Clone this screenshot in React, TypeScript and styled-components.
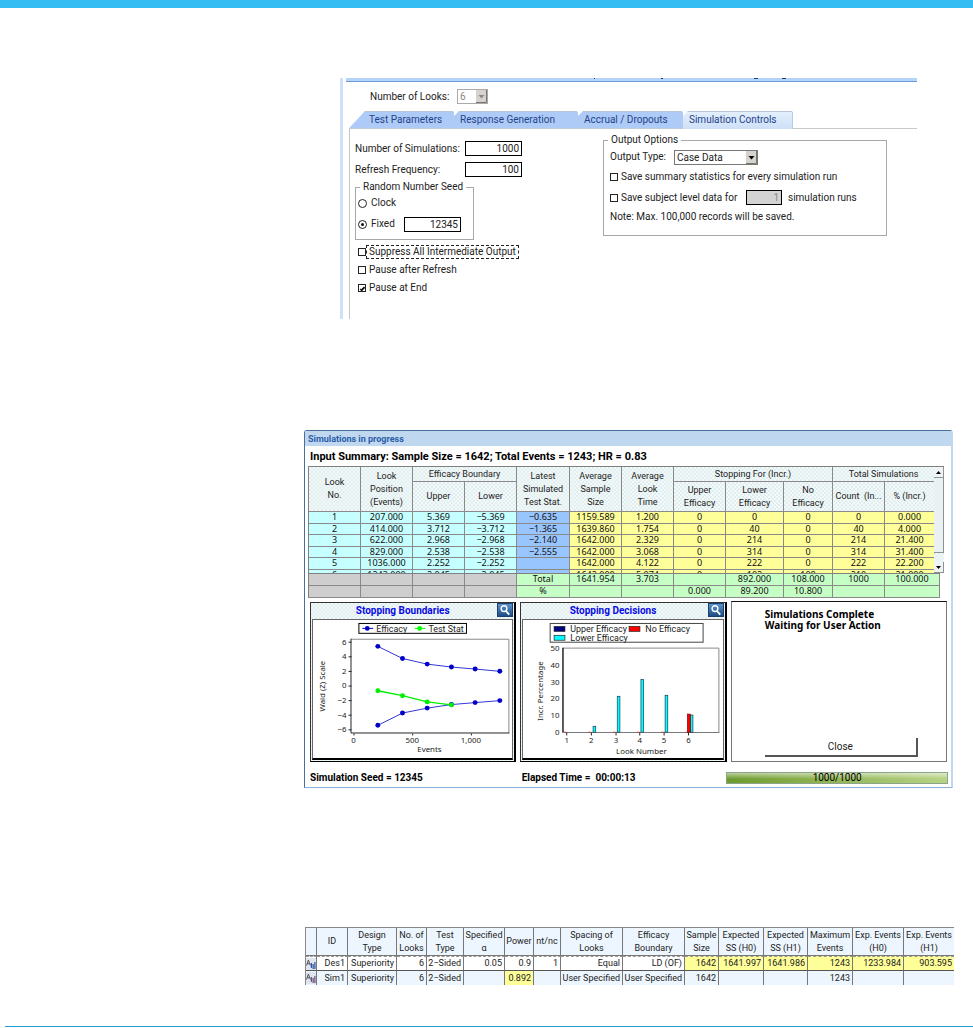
import React, { useId } from "react";
import styled, { createGlobalStyle, css } from "styled-components";

const Global = createGlobalStyle`
  *, *::before, *::after { box-sizing: border-box; }
  body {
    margin: 0;
    background: #fff;
    color: #222;
    font: 10px/14px Roboto, "Noto Sans", sans-serif;
  }
  input, button, select { font: inherit; color: inherit; margin: 0; border-radius: 0; }
`;

const texture = css`
  background: repeating-conic-gradient(#e3efee 0 25%, #f2f9fb 0 50%) 0 0 / 4px 4px;
`;

const Page = styled.div`
  display: flex;
  flex-direction: column;
`;
const TopBar = styled.div`
  height: 8px;
  background: #33bdf2;
`;
const Main = styled.main`
  padding: 70px 20px 0 304px;
`;
const BottomRule = styled.hr`
  width: calc(100% - 5px);
  height: 1px;
  margin: 41px 0 0 5px;
  border: 0;
  background: #1c9fd8;
`;

/* ---------- Simulation controls form ---------- */

const FormFrame = styled.section`
  min-height: 241px;
  margin: 0 36px 0 36px;
  border-left: 3px solid #cfe0f8;
  display: flex;
  flex-direction: column;
`;
const CaptionEdge = styled.div`
  height: 4px;
  margin-left: 3px;
  background: #b5d4fb;
  border-bottom: 1px solid #6c9bd8;
  overflow: hidden;
  svg { display: block; }
`;
const LooksRow = styled.div`
  display: flex;
  align-items: center;
  height: 29px;
  padding: 0 0 0 27px;
  label { width: 87px; }
`;
const Tabs = styled.div`
  display: flex;
  height: 18px;
  margin-left: 6px;
`;
const Tab = styled.button<{ $w: number; $active?: boolean; $first?: boolean }>`
  width: ${(p) => p.$w}px;
  padding: 0 0 0 ${(p) => (p.$first ? 20 : 6)}px;
  border: 0;
  border-top: 1px solid #b9c4d4;
  border-right: 1px solid #b4cbee;
  border-bottom: 1px solid #c3cbd8;
  border-radius: 0 2px 0 0;
  text-align: left;
  line-height: 16px;
  color: #1f4389;
  background: ${(p) => (p.$active ? "linear-gradient(#e3effc, #cfe0f8)" : "#aecbf8")};
  clip-path: ${(p) =>
    p.$first
      ? "polygon(0 100%, 0 96%, 16px 0, 100% 0, 100% 100%)"
      : "polygon(0 100%, 0 5px, 5px 0, 100% 0, 100% 100%)"};
  ${(p) => p.$active && "border-bottom-color: #cfe0f8;"}
`;
const TabFill = styled.div`
  flex: 1;
  border-bottom: 1px solid #c8c8c8;
`;
const TabBody = styled.div`
  flex: 1;
  display: grid;
  grid-template-columns: 248px minmax(0, 1fr);
  margin-left: 6px;
  padding: 4px 30px 0 5px;
  border-left: 1px solid #c4c4c4;
`;
const Column = styled.div`
  display: flex;
  flex-direction: column;
  align-items: flex-start;
  padding-top: 5px;
`;
const Field = styled.div`
  display: flex;
  align-items: center;
  height: 21px;
  label { width: 110px; white-space: nowrap; }
`;
const TextBox = styled.input<{ $w: number }>`
  width: ${(p) => p.$w}px;
  height: 15px;
  padding: 0 2px;
  border: 1px solid #000;
  background: #fff;
  text-align: right;
  line-height: 13px;
  &:disabled { background: #d3d3d3; color: #888; }
`;
const Group = styled.fieldset<{ $w: string; $h: number }>`
  width: ${(p) => p.$w};
  height: ${(p) => p.$h}px;
  margin: 0;
  min-width: 0;
  padding: 0 0 0 2px;
  border: 1px solid #a8a8a8;
  legend { padding: 0 3px; margin-left: 2px; }
`;
const OptionRow = styled.div<{ $h: number }>`
  display: flex;
  align-items: center;
  height: ${(p) => p.$h}px;
`;
const CheckLabel = styled.label<{ $focus?: boolean }>`
  padding: 0 2px;
  line-height: 12px;
  border: 1px ${(p) => (p.$focus ? "dashed #222" : "solid transparent")};
`;
const Checkbox = styled.input.attrs({ type: "checkbox" })`
  appearance: none;
  width: 8px;
  height: 8px;
  border: 1px solid #222;
  background: #fff;
  display: grid;
  place-items: center;
  &:checked::before {
    content: "";
    width: 5px;
    height: 3px;
    border-left: 1px solid #111;
    border-bottom: 2px solid #111;
    transform: rotate(-45deg);
  }
`;
const Radio = styled.input.attrs({ type: "radio" })`
  appearance: none;
  width: 9px;
  height: 9px;
  border: 1px solid #222;
  border-radius: 50%;
  display: grid;
  place-items: center;
  &:checked::before {
    content: "";
    width: 3px;
    height: 3px;
    border-radius: 50%;
    background: #111;
  }
`;
const RadioLabel = styled.label`
  width: 33px;
  margin-left: 4px;
`;
const SelectWrap = styled.span<{ $w: number }>`
  position: relative;
  display: inline-flex;
  width: ${(p) => p.$w}px;
  select {
    appearance: none;
    width: 100%;
    height: 15px;
    padding: 0 2px;
    border: 1px solid #777;
    line-height: 13px;
    background: #fff;
    opacity: 1;
  }
  select:disabled { color: #888; border-color: #aaa; }
  svg { position: absolute; right: 1px; top: 1px; pointer-events: none; }
`;
const InlineLabel = styled.label<{ $w: number }>`
  width: ${(p) => p.$w}px;
  white-space: nowrap;
`;

const Arrow = ({ muted }: { muted?: boolean }) => (
  <svg width="11" height="13" aria-hidden="true">
    <rect width="11" height="13" fill="#d6d3ce" />
    <path d="M0 12.5H10.5V0" fill="none" stroke="#77756f" />
    <path d="M2.5 5H8.5L5.5 8.5Z" fill={muted ? "#8b8983" : "#000"} />
  </svg>
);

const Check = ({ label, checked, focus }: { label: string; checked?: boolean; focus?: boolean }) => {
  const id = useId();
  return (
    <>
      <Checkbox id={id} defaultChecked={checked} />
      <CheckLabel htmlFor={id} $focus={focus}>{label}</CheckLabel>
    </>
  );
};

const LeftOptions = styled.div`
  margin-top: 3px;
  padding-left: 3px;
`;
const Note = styled.p`
  margin: 0;
  padding-left: 4px;
  line-height: 18px;
`;
const OutputRow = styled(OptionRow)`
  padding-left: 4px;
`;
const RunsLabel = styled.span`
  margin-left: 6px;
`;

function ControlsForm() {
  return (
    <FormFrame>
      <CaptionEdge>
        <svg width="574" height="3" aria-hidden="true">
          <path d="M248 0.5h1M315 0.5h2M408 0.5h4M436 0.5h4" stroke="#1d3f80" strokeWidth="1" />
        </svg>
      </CaptionEdge>
      <LooksRow>
        <label htmlFor="looks">Number of Looks:</label>
        <SelectWrap $w={31}>
          <select id="looks" disabled defaultValue="6"><option>6</option></select>
          <Arrow muted />
        </SelectWrap>
      </LooksRow>
      <Tabs role="tablist">
        <Tab role="tab" $w={105} $first>Test Parameters</Tab>
        <Tab role="tab" $w={124}>Response Generation</Tab>
        <Tab role="tab" $w={105}>Accrual / Dropouts</Tab>
        <Tab role="tab" aria-selected="true" $w={110} $active>Simulation Controls</Tab>
        <TabFill />
      </Tabs>
      <TabBody>
        <Column>
          <Field>
            <label htmlFor="sims">Number of Simulations:</label>
            <TextBox id="sims" $w={57} defaultValue="1000" />
          </Field>
          <Field>
            <label htmlFor="refresh">Refresh Frequency:</label>
            <TextBox id="refresh" $w={57} defaultValue="100" />
          </Field>
          <Group $w="119px" $h={60}>
            <legend>Random Number Seed</legend>
            <OptionRow $h={18}>
              <Radio id="clock" name="seed" />
              <RadioLabel htmlFor="clock">Clock</RadioLabel>
            </OptionRow>
            <OptionRow $h={24}>
              <Radio id="fixed" name="seed" defaultChecked />
              <RadioLabel htmlFor="fixed">Fixed</RadioLabel>
              <TextBox aria-label="Fixed seed" $w={57} defaultValue="12345" />
            </OptionRow>
          </Group>
          <LeftOptions>
            <OptionRow $h={18}><Check label="Suppress All Intermediate Output" focus /></OptionRow>
            <OptionRow $h={18}><Check label="Pause after Refresh" /></OptionRow>
            <OptionRow $h={18}><Check label="Pause at End" checked /></OptionRow>
          </LeftOptions>
        </Column>
        <Group $w="100%" $h={103}>
          <legend>Output Options</legend>
          <OutputRow $h={20}>
            <InlineLabel htmlFor="otype" $w={64}>Output Type:</InlineLabel>
            <SelectWrap $w={84}>
              <select id="otype" defaultValue="Case Data"><option>Case Data</option></select>
              <Arrow />
            </SelectWrap>
          </OutputRow>
          <OutputRow $h={20}><Check label="Save summary statistics for every simulation run" /></OutputRow>
          <OutputRow $h={21}>
            <InlineLabel as="span" $w={136}>
              <OptionRow $h={21}><Check label="Save subject level data for" /></OptionRow>
            </InlineLabel>
            <TextBox aria-label="Number of simulation runs to save" $w={36} defaultValue="1" disabled />
            <RunsLabel>simulation runs</RunsLabel>
          </OutputRow>
          <Note>Note: Max. 100,000 records will be saved.</Note>
        </Group>
      </TabBody>
    </FormFrame>
  );
}

/* ---------- Simulations in progress window ---------- */

const Window = styled.section`
  margin-top: 111px;
  border: solid #4a6f9c;
  border-width: 1px 0 1px 1px;
  border-right: 2px solid #c0d7f0;
  border-bottom-color: #8db0da;
  border-radius: 3px 3px 0 0;
  background: #fff;
`;
const TitleBar = styled.h2`
  margin: 0;
  height: 15px;
  padding-left: 3px;
  background: #c0d7f0;
  color: #2a5da8;
  font-size: 9px;
  line-height: 16px;
  font-weight: 700;
`;
const Summary = styled.h3`
  margin: 0;
  height: 20px;
  padding-left: 5px;
  font-size: 11px;
  line-height: 21px;
  font-weight: 700;
  color: #000;
`;
const GridArea = styled.div`
  margin: 0 7px 0 3px;
`;
const Scroller = styled.div`
  display: grid;
  grid-template-columns: minmax(0, 1fr) 10px;
  height: 107px;
  overflow: hidden;
`;
const ScrollBar = styled.div`
  height: 107px;
  display: flex;
  flex-direction: column;
  border-top: 1px solid #808080;
  ${texture}
`;
const ScrollBtn = styled.button`
  height: 11px;
  padding: 0;
  border: solid #8a9494;
  border-width: 0 1px 1px 0;
  background: #f0f4f5;
  svg { display: block; margin: auto; }
`;
const Thumb = styled.div`
  height: 75px;
  margin-bottom: auto;
  border: solid #8a9494;
  border-width: 0 1px 1px 0;
  background: #eaf1f3;
`;
const SimTable = styled.table`
  width: 100%;
  table-layout: fixed;
  border-collapse: separate;
  border-spacing: 0;
  border-top: 1px solid #808080;
  border-left: 1px solid #808080;
  font-size: 9px;
  text-align: center;
  th, td {
    padding: 0;
    border: solid #8a8a8a;
    border-width: 0 1px 1px 0;
    font-weight: 400;
    white-space: nowrap;
  }
  th { ${texture} line-height: 13px; height: 30px; white-space: pre-line; }
  thead tr:first-child th { height: 15px; }
  td {
    height: 12px;
    padding-bottom: 2px;
    line-height: 9px;
    font-family: "Noto Sans", sans-serif;
    color: #111;
  }
  tbody tr:nth-child(even) td { height: 11px; padding-bottom: 1px; }
`;
const tone = { cyan: "#c5ffff", blue: "#99c5ff", yellow: "#ffff99", grey: "#cecece", green: "#c6ffc6" };
const Cell = styled.td<{ $tone: keyof typeof tone }>`
  background: ${(p) => tone[p.$tone]};
`;
const TotalsTable = styled(SimTable)`
  width: calc(100% - 5px);
  tbody tr:nth-child(even) td { height: 12px; padding-bottom: 2px; }
`;

const widths = [52, 52, 52, 52, 53, 52, 52, 52, 58, 49, 52, 50];
const rows = [
  ["1", "207.000", "5.369", "−5.369", "−0.635", "1159.589", "1.200", "0", "0", "0", "0", "0.000"],
  ["2", "414.000", "3.712", "−3.712", "−1.365", "1639.860", "1.754", "0", "40", "0", "40", "4.000"],
  ["3", "622.000", "2.968", "−2.968", "−2.140", "1642.000", "2.329", "0", "214", "0", "214", "21.400"],
  ["4", "829.000", "2.538", "−2.538", "−2.555", "1642.000", "3.068", "0", "314", "0", "314", "31.400"],
  ["5", "1036.000", "2.252", "−2.252", "", "1642.000", "4.122", "0", "222", "0", "222", "22.200"],
  ["6", "1243.000", "2.045", "−2.045", "", "1642.000", "5.074", "0", "102", "108", "210", "21.000"],
];
const totals = [
  ["", "", "", "", "Total", "1641.954", "3.703", "", "892.000", "108.000", "1000", "100.000"],
  ["", "", "", "", "%", "", "", "0.000", "89.200", "10.800", "", ""],
];
const rowTone = (i: number): keyof typeof tone => (i < 4 ? "cyan" : i === 4 ? "blue" : "yellow");

const Cols = ({ list }: { list: number[] }) => (
  <colgroup>{list.map((w, i) => <col key={i} style={{ width: w }} />)}</colgroup>
);

function ProgressGrid() {
  return (
    <GridArea>
      <Scroller>
        <SimTable>
          <Cols list={widths} />
          <thead>
            <tr>
              <th rowSpan={2}>{"Look\nNo."}</th>
              <th rowSpan={2}>{"Look\nPosition\n(Events)"}</th>
              <th colSpan={2}>Efficacy Boundary</th>
              <th rowSpan={2}>{"Latest\nSimulated\nTest Stat."}</th>
              <th rowSpan={2}>{"Average\nSample\nSize"}</th>
              <th rowSpan={2}>{"Average\nLook\nTime"}</th>
              <th colSpan={3}>Stopping For (Incr.)</th>
              <th colSpan={2}>Total Simulations</th>
            </tr>
            <tr>
              <th>Upper</th>
              <th>Lower</th>
              <th>{"Upper\nEfficacy"}</th>
              <th>{"Lower\nEfficacy"}</th>
              <th>{"No\nEfficacy"}</th>
              <th>Count&nbsp; (In...</th>
              <th>% (Incr.)</th>
            </tr>
          </thead>
          <tbody>
            {rows.map((r) => (
              <tr key={r[0]}>{r.map((c, i) => <Cell key={i} $tone={rowTone(i)}>{c}</Cell>)}</tr>
            ))}
          </tbody>
        </SimTable>
        <ScrollBar>
          <ScrollBtn aria-label="Scroll up"><svg width="5" height="3"><path d="M0 3L2.5 0L5 3Z" /></svg></ScrollBtn>
          <Thumb />
          <ScrollBtn aria-label="Scroll down"><svg width="5" height="3"><path d="M0 0L2.5 3L5 0Z" /></svg></ScrollBtn>
        </ScrollBar>
      </Scroller>
      <TotalsTable>
        <Cols list={[...widths.slice(0, 11), 55]} />
        <tbody>
          {totals.map((r, k) => (
            <tr key={k}>{r.map((c, i) => <Cell key={i} $tone={i < 4 ? "grey" : "green"}>{c}</Cell>)}</tr>
          ))}
        </tbody>
      </TotalsTable>
    </GridArea>
  );
}

const Panels = styled.div`
  display: grid;
  grid-template-columns: 207fr 207fr 217fr;
  gap: 4px;
  padding: 4px 4px 0 5px;
`;
const ChartPanel = styled.section`
  border: 1px solid #333;
  border-right: 2px solid #000;
  border-bottom: 1px solid #000;
  padding: 0 1px 1px;
  ${texture}
`;
const PanelHead = styled.div`
  position: relative;
  height: 16px;
  text-align: center;
  h4 {
    margin: 0;
    padding-right: 20px;
    font-size: 10px;
    line-height: 16px;
    color: #0a0ae6;
  }
  button {
    position: absolute;
    right: 0;
    top: 0;
    width: 16px;
    height: 14px;
    padding: 0;
    border: 1px solid #1d4070;
    background: linear-gradient(#5b93cc, #1f4d86);
  }
  svg { display: block; }
`;
const ChartBox = styled.div`
  border: 1px solid #666;
  border-bottom: 2px solid #000;
  background: #fff;
  svg { display: block; width: 100%; }
`;
const ChartSvg = styled.svg`
  font-size: 8px;
  font-family: "Noto Sans", sans-serif;
  fill: #222;
`;
const LegendText = styled.text`
  font-size: 9px;
  font-family: Roboto, sans-serif;
`;

const Magnifier = () => (
  <svg width="14" height="12" viewBox="0 0 14 12" fill="none" stroke="#fff" aria-hidden="true">
    <circle cx="6" cy="4.6" r="2.9" strokeWidth="1.4" />
    <path d="M8 7l3.2 3.6" strokeWidth="1.8" />
  </svg>
);

const xs = [377.7, 402.7, 427.7, 452.3, 476.3, 501.3];
const upper = [646.7, 659, 664.7, 667.7, 669.7, 672];
const lower = [726.7, 714.3, 709.3, 705.7, 703.7, 701.7];
const testStat = [691.7, 696.7, 703, 706];

const Series = ({ ys, color, width }: { ys: number[]; color: string; width: number }) => (
  <g fill={color}>
    <polyline points={ys.map((y, i) => `${xs[i]},${y}`).join(" ")} fill="none" stroke={color} strokeWidth={width} />
    {ys.map((y, i) => <circle key={i} cx={xs[i]} cy={y} r="2.5" />)}
  </g>
);

function BoundariesChart() {
  return (
    <ChartSvg viewBox="312 620 202 140" role="img" aria-label="Stopping boundaries">
      <rect x="358.5" y="623.5" width="109" height="10" fill="#fff" stroke="#000" />
      <path d="M362 628.5h11" stroke="#0000c8" /><circle cx="367" cy="628.5" r="2.4" fill="#0000c8" />
      <LegendText x="376" y="632">Efficacy</LegendText>
      <path d="M415 628.5h11" stroke="#0f0" /><circle cx="420" cy="628.5" r="2.4" fill="#0f0" />
      <LegendText x="429" y="632">Test Stat</LegendText>
      <path d="M350.5 639.5H510.5V734.5" fill="none" stroke="#888" />
      <path d="M350.5 639V734.5H511" fill="none" stroke="#222" />
      {[6, 4, 2, 0, -2, -4, -6].map((v, i) => (
        <g key={v}>
          <path d={`M348 ${642.5 + i * 14.8}h3`} stroke="#222" />
          <text x="346" y={645 + i * 14.8} textAnchor="end">{String(v).replace("-", "−")}</text>
        </g>
      ))}
      {["0", "500", "1,000"].map((v, i) => (
        <g key={v}>
          <path d={`M${353.5 + i * 59.5} 735v2`} stroke="#222" />
          <text x={353 + i * 59.5} y="745" textAnchor="middle">{v}</text>
        </g>
      ))}
      <text x="430" y="754" textAnchor="middle">Events</text>
      <text transform="translate(324 687) rotate(-90)" textAnchor="middle">Wald (Z) Scale</text>
      <Series ys={upper} color="#0000c8" width={0.8} />
      <Series ys={lower} color="#0000c8" width={0.8} />
      <Series ys={testStat} color="#00f000" width={1.4} />
    </ChartSvg>
  );
}

const bars = [
  [594, 727.7], [618.5, 697.3], [642.5, 680.3], [667, 696.3], [692.5, 716.3],
];

function DecisionsChart() {
  return (
    <ChartSvg viewBox="523 620 202 140" role="img" aria-label="Stopping decisions">
      <rect x="550.5" y="623.5" width="155" height="19" fill="#fff" stroke="#444" />
      <rect x="554.5" y="626.5" width="11" height="5" fill="#000080" stroke="#222" strokeWidth="0.7" />
      <LegendText x="571" y="632">Upper Efficacy</LegendText>
      <rect x="630.5" y="626.5" width="11" height="5" fill="#f00" stroke="#222" strokeWidth="0.7" />
      <LegendText x="647" y="632">No Efficacy</LegendText>
      <rect x="554.5" y="635.5" width="11" height="5" fill="#0ff" stroke="#222" strokeWidth="0.7" />
      <LegendText x="571" y="641">Lower Efficacy</LegendText>
      <path d="M563.5 648.5H721.5V734" fill="none" stroke="#888" />
      <path d="M563.5 648V734" stroke="#111" strokeWidth="1.4" />
      <path d="M563 734H722" stroke="#777" />
      {[50, 40, 30, 20, 10, 0].map((v, i) => (
        <text key={v} x="560" y={651.5 + i * 17} textAnchor="end">{v}</text>
      ))}
      {[567.3, 592.3, 617.3, 641.3, 666, 690.7].map((x, i) => (
        <g key={x}>
          <path d={`M${x} 734v3`} stroke="#222" />
          <path d={`M${x - 3} 733.7h3`} stroke="#d33" strokeWidth="0.7" />
          <text x={x} y="745" textAnchor="middle">{i + 1}</text>
        </g>
      ))}
      {bars.map(([x, y]) => (
        <rect key={x} x={x} y={y} width="2.7" height={733.7 - y} fill="#0ff" stroke="#123c50" strokeWidth="0.7" />
      ))}
      <rect x="689.5" y="715.3" width="3" height="18.4" fill="#f00" stroke="#600" strokeWidth="0.6" />
      <text x="643" y="756" textAnchor="middle">Look Number</text>
      <text transform="translate(543 692) rotate(-90)" textAnchor="middle">Incr. Percentage</text>
    </ChartSvg>
  );
}

const StatusPanel = styled.section`
  display: flex;
  flex-direction: column;
  margin-top: -1px;
  padding: 7px 28px 4px 33px;
  border: 1px solid #777;
  border-top-color: #111;
  p { margin: 0; color: #000; font: 700 10px/11px "Noto Sans", sans-serif; }
`;
const CloseButton = styled.button`
  height: 19px;
  margin-top: auto;
  padding: 0;
  border: solid #555;
  border-width: 0 2px 2px 0;
  background: #fff;
`;
const WindowFooter = styled.div`
  display: grid;
  grid-template-columns: 212fr 205fr 222fr;
  align-items: center;
  height: 25px;
  padding: 6px 3px 0 5px;
  color: #000;
  font-weight: 700;
`;
const ProgressBar = styled.div`
  height: 12px;
  border: 1px solid #8aa58a;
  background: linear-gradient(#fff8, #fff0 60%), linear-gradient(90deg, #6d9a2c, #b8d386);
  text-align: center;
  font-weight: 400;
  line-height: 10px;
`;

const Panel = ({ title, children }: { title: string; children: React.ReactNode }) => (
  <ChartPanel>
    <PanelHead>
      <h4>{title}</h4>
      <button aria-label={`Zoom ${title}`}><Magnifier /></button>
    </PanelHead>
    <ChartBox>{children}</ChartBox>
  </ChartPanel>
);

function ProgressWindow() {
  return (
    <Window>
      <TitleBar>Simulations in progress</TitleBar>
      <Summary>Input Summary: Sample Size = 1642; Total Events = 1243; HR = 0.83</Summary>
      <ProgressGrid />
      <Panels>
        <Panel title="Stopping Boundaries"><BoundariesChart /></Panel>
        <Panel title="Stopping Decisions"><DecisionsChart /></Panel>
        <StatusPanel>
          <p>Simulations Complete</p>
          <p>Waiting for User Action</p>
          <CloseButton>Close</CloseButton>
        </StatusPanel>
      </Panels>
      <WindowFooter>
        <span>Simulation Seed = 12345</span>
        <span>Elapsed Time =&nbsp; 00:00:13</span>
        <ProgressBar role="progressbar" aria-valuenow={1000} aria-valuemax={1000}>1000/1000</ProgressBar>
      </WindowFooter>
    </Window>
  );
}

/* ---------- Design comparison table ---------- */

const DesignTable = styled.table`
  width: calc(100% - 1px);
  margin: 139px 0 0 1px;
  table-layout: fixed;
  border-collapse: separate;
  border-spacing: 0;
  border-top: 1px solid #888;
  border-left: 1px solid #888;
  font-size: 9px;
  th, td {
    padding: 0;
    border-right: 1px solid #777;
    font-weight: 400;
    white-space: nowrap;
  }
  th:last-child, td:last-child { border-right: 0; }
  th { height: 28px; line-height: 13px; white-space: pre-line; background: #edf6fe; border-bottom: 1px solid #777; }
  td { height: 14px; line-height: 13px; padding-right: 2px; text-align: right; }
  td svg { display: block; }
`;
const DesignRow = styled.tr<{ $selected?: boolean }>`
  td {
    background: ${(p) => (p.$selected ? "#fff" : "#edf6fe")};
    ${(p) => p.$selected && css`
      height: 15px;
      border-top: 1px dashed #999;
      border-bottom: 1px solid #555;
    `}
  }
`;
const DesignCell = styled.td<{ $hot?: boolean }>`
  && { ${(p) => p.$hot && "background: #ffff99;"} }
`;

const DesignIcon = ({ color }: { color: string }) => (
  <svg width="10" height="12" viewBox="0 0 10 12" aria-hidden="true">
    <rect width="10" height="12" fill="#dfe5ee" />
    <path d="M0.5 7.5L2.4 2L4.4 7.5M1.2 5.8H3.8" fill="none" stroke="#555" strokeWidth="1" />
    <path d="M4.8 5h1.3v5H4.800zM6.600 6h1.200v5H6.600zM8.300 4h1.200v7H8.300z" fill={color} />
  </svg>
);

const designCols = [11, 31, 49, 30, 37, 41, 29, 27, 62, 62, 34, 45, 44, 45, 51, 50];
const heads = ["", "ID", "Design\nType", "No. of\nLooks", "Test\nType", "Specified\nα", "Power", "nt/nc", "Spacing of\nLooks",
  "Efficacy\nBoundary", "Sample\nSize", "Expected\nSS (H0)", "Expected\nSS (H1)", "Maximum\nEvents", "Exp. Events\n(H0)", "Exp. Events\n(H1)"];
const des1 = ["Des1", "Superiority", "6", "2−Sided", "0.05", "0.9", "1", "Equal", "LD (OF)", "1642", "1641.997", "1641.986", "1243", "1233.984", "903.595"];
const sim1 = ["Sim1", "Superiority", "6", "2−Sided", "", "0.892", "", "User Specified", "User Specified", "1642", "", "", "1243", "", ""];

export default function App() {
  return (
    <Page>
      <Global />
      <TopBar />
      <Main>
        <ControlsForm />
        <ProgressWindow />
        <DesignTable>
          <Cols list={designCols} />
          <thead><tr>{heads.map((h, i) => <th key={i}>{h}</th>)}</tr></thead>
          <tbody>
            <DesignRow $selected>
              <DesignCell><DesignIcon color="#2c55a8" /></DesignCell>
              {des1.map((c, i) => <DesignCell key={i} $hot={i > 8}>{c}</DesignCell>)}
            </DesignRow>
            <DesignRow>
              <DesignCell><DesignIcon color="#70507c" /></DesignCell>
              {sim1.map((c, i) => <DesignCell key={i} $hot={i === 5}>{c}</DesignCell>)}
            </DesignRow>
          </tbody>
        </DesignTable>
      </Main>
      <BottomRule />
    </Page>
  );
}
